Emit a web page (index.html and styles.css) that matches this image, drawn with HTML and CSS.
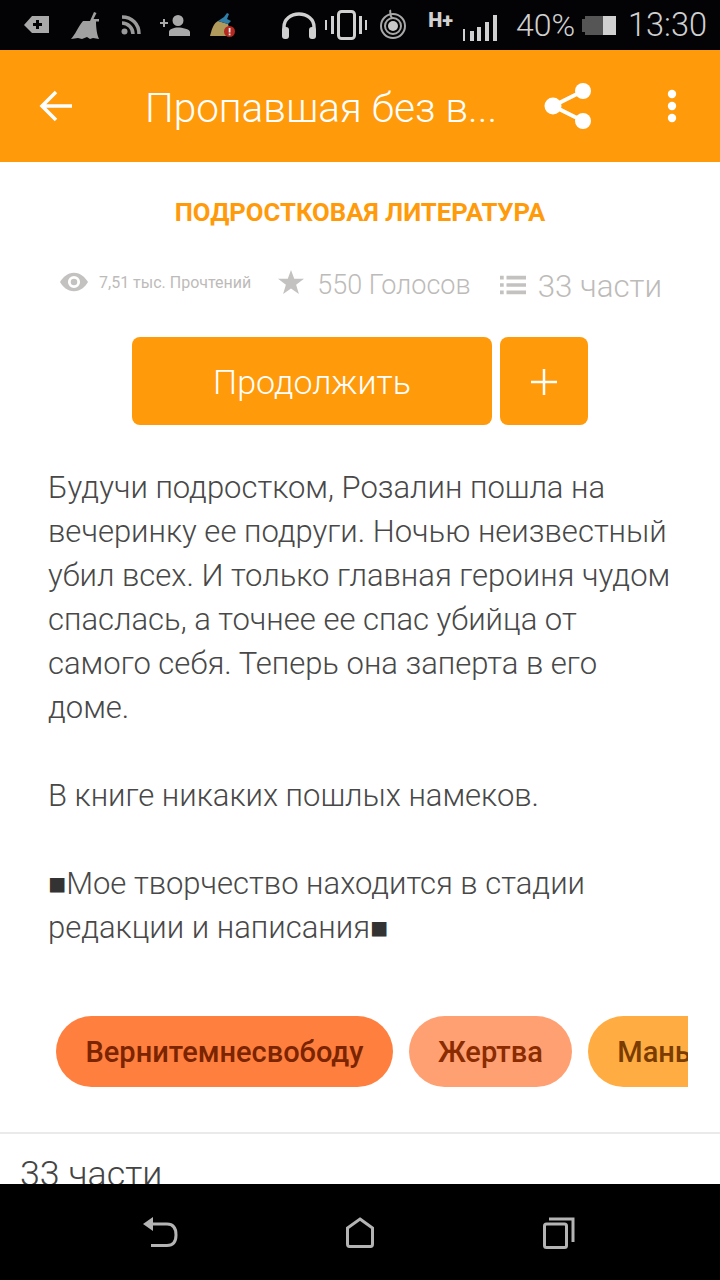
FILE: index.html
```html
<!DOCTYPE html>
<html>
<head>
<meta charset="utf-8"/>
<title>Пропавшая без вести</title>
<link rel="stylesheet" href="styles.css">
</head>
<body>
<div class="phone">
    <div class="statusbar">
        <div class="status_left">
            <svg class="ic_tag" width="28" height="20" viewBox="0 0 28 20"><path fill="#a9a9a9" fill-rule="evenodd" d="M1 10 9 1H26V18H9ZM13 8V5H16V8H19V11H16V14H13V11H10V8Z"/></svg>
            <svg class="ic_broom" width="32" height="30" viewBox="0 0 32 30"><path fill="#a0a0a0" d="M1 29C5 25 8 17 13 11H20L24 2 26.500 3 23.500 9H29V11.500H26C26 18 27 25 29 29L23 28 20 29 17 27 12 29 8 28Z"/></svg>
            <svg class="ic_rss" width="20" height="20" viewBox="0 0 20 20"><circle cx="3.500" cy="16.500" r="3" fill="#9a9a9a"/><path fill="none" stroke="#9a9a9a" stroke-width="3.500" d="M1 8C7 8 12 13 12 19M1 2C11 2 18 9 18 19"/></svg>
            <svg class="ic_person" width="30" height="22" viewBox="0 0 30 22"><path fill="#a9a9a9" d="M0 8H3V5H5V8H8V10H5V13H3V10H0ZM18 1A5.500 5.500 0 1 1 18 12 5.500 5.500 0 0 1 18 1ZM9 22V18C9 15 14 13.500 18 13.500S30 15 30 18V22Z"/></svg>
            <svg class="ic_clean" width="26" height="26" viewBox="0 0 26 26"><path fill="#b09a5c" d="M0 24C2 16 4 11 8 9L18 12C19 15 19 17 18 24Z"/><path fill="#2f7fa8" d="M8 9 14 5 17 1 19 2 17 7 21 9 18 12Z"/><circle cx="19.500" cy="19.500" r="5.500" fill="#b5281f"/><rect x="18.700" y="16" width="1.800" height="4.500" fill="#eee"/><rect x="18.700" y="21.500" width="1.800" height="1.800" fill="#eee"/></svg>
        </div>
        <div class="status_right">
            <svg class="ic_phones" width="36" height="28" viewBox="0 0 36 28"><path fill="none" stroke="#d0d0d0" stroke-width="3.500" d="M3 20V16C3 8 10 3 18 3S33 8 33 16V20"/><rect x="1" y="16" width="7" height="12" rx="3" fill="#d0d0d0"/><rect x="28" y="16" width="7" height="12" rx="3" fill="#d0d0d0"/></svg>
            <svg class="ic_vibrate" width="42" height="30" viewBox="0 0 42 30"><rect x="13.500" y="1.500" width="16" height="27" rx="3" fill="none" stroke="#d0d0d0" stroke-width="3"/><path fill="#d0d0d0" d="M0 10H2V20H0ZM6 6H9V24H6ZM34 6H37V24H34ZM40 10H42V20H40Z"/></svg>
            <svg class="ic_swirl" width="28" height="30" viewBox="0 0 28 30"><g fill="none" stroke="#a8a8a8" stroke-width="2"><circle cx="14" cy="17" r="12"/><circle cx="14" cy="17" r="8"/><path d="M13 9C10 5 12 3 11 1"/></g><circle cx="14" cy="17" r="5" fill="#c8c8c8"/></svg>
            <span class="hplus">H+</span>
            <svg class="ic_signal" width="36" height="27" viewBox="0 0 36 27"><path fill="#d0d0d0" d="M1 14H3V26H1ZM8 16H12V26H8ZM15 12H19V26H15ZM23 7H27V26H23ZM31 0H35V26H31Z"/></svg>
            <span class="percent">40%</span>
            <svg class="ic_battery" width="34" height="22" viewBox="0 0 34 22"><path fill="#555" d="M0 5H3V2H22V21H3V18H0Z"/><rect x="21" y="2" width="13" height="19" fill="#d0d0d0"/></svg>
            <span class="clock">13:30</span>
        </div>
    </div>

    <div class="toolbar">
        <svg class="back" width="34" height="32" viewBox="0 0 34 32"><path fill="none" stroke="#fff" stroke-width="3.500" d="M2 16H33M17 2 3 16 17 30"/></svg>
        <div class="title">Пропавшая без в...</div>
        <svg class="share" width="48" height="48" viewBox="0 0 48 48"><path fill="none" stroke="#fff" stroke-width="4" d="M39 9 9 24 39 39"/><circle cx="39" cy="9" r="8" fill="#fff"/><circle cx="9" cy="24" r="8.500" fill="#fff"/><circle cx="39" cy="39" r="8" fill="#fff"/></svg>
        <svg class="more" width="10" height="34" viewBox="0 0 10 34"><circle cx="5" cy="5" r="4.200" fill="#fff"/><circle cx="5" cy="17" r="4.200" fill="#fff"/><circle cx="5" cy="29" r="4.200" fill="#fff"/></svg>
    </div>

    <div class="content">
        <div class="category">ПОДРОСТКОВАЯ ЛИТЕРАТУРА</div>
        <div class="stats">
            <div class="stat stat_reads">
                <svg width="28" height="22" viewBox="0 0 30 22"><path fill="#c4c2c0" fill-rule="evenodd" d="M15 1C22 1 27 6 30 11 27 16 22 21 15 21S3 16 0 11C3 6 8 1 15 1ZM15 4.500A6.500 6.500 0 1 0 15 17.500 6.500 6.500 0 0 0 15 4.500ZM15 7.500A3.500 3.500 0 1 1 15 14.500 3.500 3.500 0 0 1 15 7.500Z"/></svg>
                <span>7,51 тыс. Прочтений</span>
            </div>
            <div class="stat stat_votes">
                <svg width="26" height="26" viewBox="0 0 28 26"><path fill="#c4c2c0" d="M14 0 17.500 9.500H28L19.500 16 22.500 26 14 20 5.500 26 8.500 16 0 9.500H10.500Z"/></svg>
                <span>550 Голосов</span>
            </div>
            <div class="stat stat_parts">
                <svg width="26" height="22" viewBox="0 0 28 22"><path fill="#c4c2c0" d="M0 1H4V5H0ZM7 1H28V5H7ZM0 9H4V13H0ZM7 9H28V13H7ZM0 17H4V21H0ZM7 17H28V21H7Z"/></svg>
                <span>33 части</span>
            </div>
        </div>
        <div class="actions">
            <div class="btn btn_continue">Продолжить</div>
            <div class="btn btn_add">
                <svg width="26" height="26" viewBox="0 0 26 26"><path fill="none" stroke="#fff" stroke-width="2.500" d="M13 0V26M0 13H26"/></svg>
            </div>
        </div>
        <div class="description">
            <p>Будучи подростком, Розалин пошла на вечеринку ее подруги. Ночью неизвестный убил всех. И только главная героиня чудом спаслась, а точнее ее спас убийца от самого себя. Теперь она заперта в его доме.</p>
            <p>В книге никаких пошлых намеков.</p>
            <p><span class="sq">■</span>Мое творчество находится в стадии редакции и написания<span class="sq">■</span></p>
        </div>
        <div class="tags">
            <div class="tag tag_one">Вернитемнесвободу</div>
            <div class="tag tag_two">Жертва</div>
            <div class="tag tag_three">Маньяк</div>
        </div>
        <div class="parts_head">33 части</div>
    </div>

    <div class="navbar">
        <svg width="35" height="30" viewBox="0 0 35 30"><path fill="none" stroke="#b4b4b4" stroke-width="3" d="M6 7H24C30 7 33 11 33 18S30 28.500 24 28.500H8"/><path fill="#b4b4b4" d="M0 7 10 0V14Z"/></svg>
        <svg class="nav_home" width="28" height="31" viewBox="0 0 28 31"><path fill="none" stroke="#b4b4b4" stroke-width="3" d="M14 2 26.500 11V27C26.500 28.500 26 29.500 24.500 29.500H3.500C2 29.500 1.500 28.500 1.500 27V11Z"/></svg>
        <svg width="32" height="33" viewBox="0 0 32 33"><rect x="1.500" y="8" width="22" height="23.500" rx="2" fill="none" stroke="#b4b4b4" stroke-width="3"/><path fill="none" stroke="#b4b4b4" stroke-width="3" d="M6 3H30V26"/></svg>
    </div>
</div>
</body>
</html>
```
FILE: styles.css
```css
html, body {
    padding: 0;
    margin: 0;
}
body {
    font-family: Roboto, "Liberation Sans", sans-serif;
    background: #000;
}
.phone {
    width: 720px;
    height: 1280px;
    display: flex;
    flex-direction: column;
    overflow: hidden;
}
.statusbar {
    height: 50px;
    flex: none;
    display: flex;
    justify-content: space-between;
    align-items: center;
    background: #030305;
    color: #d0d0d0;
}
.status_left {
    display: flex;
    align-items: center;
    padding-left: 23px;
}
.ic_broom { margin-left: 19px; }
.ic_rss { margin-left: 19px; }
.ic_person { margin-left: 19px; }
.ic_clean { margin-left: 20px; }
.status_right {
    display: flex;
    align-items: center;
    padding-right: 13px;
}
.ic_vibrate { margin-left: 8px; }
.ic_swirl { margin: 0 0 3px 12px; }
.hplus {
    align-self: flex-start;
    margin: 3px 0 0 21px;
    font-size: 20px;
    font-weight: 900;
    line-height: 22px;
}
.ic_signal { align-self: flex-start; margin: 9px 0 0 9px; }
.percent {
    margin-left: 18px;
    font-size: 32px;
    font-weight: 300;
}
.ic_battery { margin-left: 7px; }
.clock {
    margin-left: 12px;
    font-size: 32.500px;
    font-weight: 300;
}
.toolbar {
    height: 112px;
    flex: none;
    display: flex;
    align-items: center;
    background: #ff9a0a;
    color: #fff;
}
.back { margin-left: 39px; }
.title {
    margin: 4px 0 0 72px;
    width: 353px;
    font-size: 40.500px;
    font-weight: 300;
    white-space: nowrap;
}
.share { margin-left: 46px; }
.more { margin-left: 75px; }
.content {
    flex: 1;
    min-height: 0;
    overflow: hidden;
    background: #fff;
}
.category {
    margin-top: 34px;
    text-align: center;
    color: #ff9a0a;
    font-size: 25.700px;
    font-weight: 700;
    line-height: 32px;
}
.stats {
    margin-top: 37px;
    padding-left: 60px;
    height: 40px;
    display: flex;
    align-items: center;
    color: #bdbbb9;
}
.stat {
    display: flex;
    align-items: center;
}
.stat_reads { font-size: 16px; gap: 11px; margin-top: -6px; }
.stat_votes { font-size: 27px; gap: 13px; margin-left: 27px; font-weight: 300; }
.stat_votes svg { margin-bottom: 6px; }
.stat_parts { font-size: 31.300px; gap: 12px; margin-left: 29px; margin-top: 3px; font-weight: 300; }
.stat_parts svg { margin-bottom: 3px; }
.actions {
    margin-top: 32px;
    display: flex;
    justify-content: center;
    gap: 8px;
}
.btn {
    height: 88px;
    display: flex;
    align-items: center;
    justify-content: center;
    border-radius: 8px;
    background: #ff9a0a;
    color: #fff;
    font-size: 34px;
    font-weight: 300;
    padding-top: 1px;
    box-sizing: border-box;
}
.btn_continue { width: 360px; }
.btn_add { width: 88px; }
.description {
    margin-top: 41px;
    padding: 0 48px;
    color: #484848;
    font-size: 31px;
    font-weight: 300;
    line-height: 44px;
}
.description p {
    margin: 0 0 44px;
}
.sq {
    font-size: 30px;
    line-height: 0;
    color: #333;
}
.tags {
    margin: 66px 32px 0 56px;
    display: flex;
    gap: 16px;
    overflow: hidden;
}
.tag {
    flex: none;
    height: 71px;
    padding: 0 29.500px;
    display: flex;
    align-items: center;
    border-radius: 36px;
    font-size: 29px;
    font-weight: 500;
}
.tag_one { background: #ff7f3f; color: #7a2400; }
.tag_two { background: #ffa073; color: #8a2c00; padding: 0 29px; }
.tag_three { background: #ffad42; color: #7a3c00; }
.parts_head {
    margin-top: 45px;
    padding: 18px 20px 0;
    border-top: 2px solid #eaeaea;
    color: #444;
    font-size: 35.800px;
    font-weight: 300;
    line-height: 44px;
}
.navbar {
    height: 96px;
    flex: none;
    display: flex;
    align-items: center;
    background: #000;
    padding: 0 145px 0 143px;
    justify-content: space-between;
}
.nav_home { margin-left: -2px; }
```
